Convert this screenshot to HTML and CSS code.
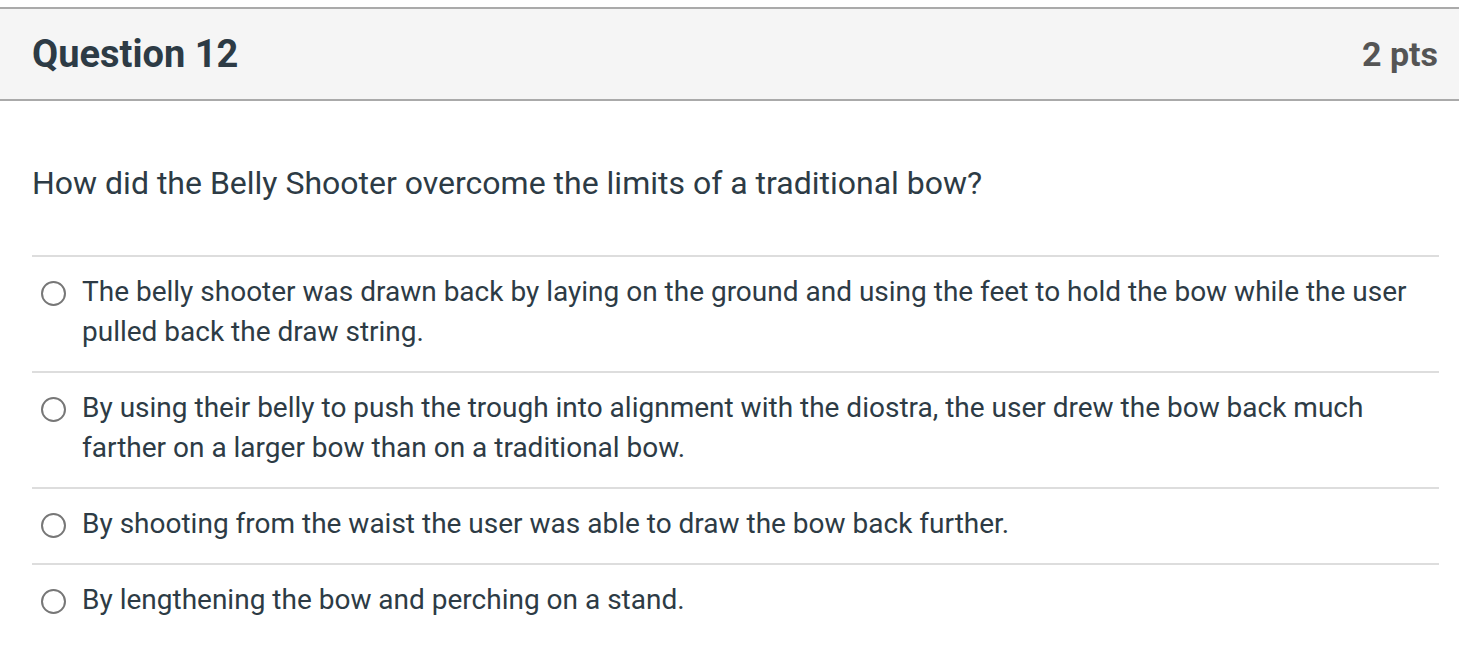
FILE: index.html
```html
<!DOCTYPE html>
<html>
<head>
<meta charset="utf-8">
<link rel="stylesheet" href="styles.css">
</head>
<body>
<div class="card">
  <div class="header">
    <h2 class="title">Question 12</h2>
    <span class="pts">2 pts</span>
  </div>
  <div class="content">
    <p class="question">How did the Belly Shooter overcome the limits of a traditional bow?</p>
    <div class="answers">
      <label class="answer"><span class="radio"></span><span class="text">The belly shooter was drawn back by laying on the ground and using the feet to hold the bow while the user pulled back the draw string.</span></label>
      <label class="answer"><span class="radio"></span><span class="text">By using their belly to push the trough into alignment with the diostra, the user drew the bow back much farther on a larger bow than on a traditional bow.</span></label>
      <label class="answer"><span class="radio"></span><span class="text">By shooting from the waist the user was able to draw the bow back further.</span></label>
      <label class="answer"><span class="radio"></span><span class="text">By lengthening the bow and perching on a stand.</span></label>
    </div>
  </div>
</div>
</body>
</html>
```
FILE: styles.css
```css
html, body {
  margin: 0;
  padding: 0;
  background: #fff;
}
body {
  padding-top: 7px;
  font-family: Roboto, "Liberation Sans", sans-serif;
  color: #2d3b45;
}
.card {
  border-top: 2px solid #aaaaaa;
}
.header {
  display: flex;
  justify-content: space-between;
  align-items: center;
  height: 90px;
  padding: 0 21px 0 32px;
  background: #f5f5f5;
  border-bottom: 2px solid #aaaaaa;
}
.title {
  margin: 0;
  font-size: 38px;
  font-weight: 700;
  color: #2d3b45;
}
.pts {
  font-size: 34px;
  font-weight: 700;
  color: #555555;
}
.content {
  padding: 0 20px 0 32px;
}
.question {
  margin: 62px 0 52px;
  font-size: 32px;
  line-height: 40px;
}
.answer {
  display: flex;
  align-items: flex-start;
  border-top: 2px solid #dddddd;
  padding: 15px 0 19px;
  font-size: 28px;
  line-height: 40px;
}
.radio {
  flex: none;
  width: 21px;
  height: 21px;
  border: 2px solid #777777;
  border-radius: 50%;
  margin: 9px 16px 0 9px;
  box-sizing: content-box;
}
.text {
  flex: 1;
}
```
